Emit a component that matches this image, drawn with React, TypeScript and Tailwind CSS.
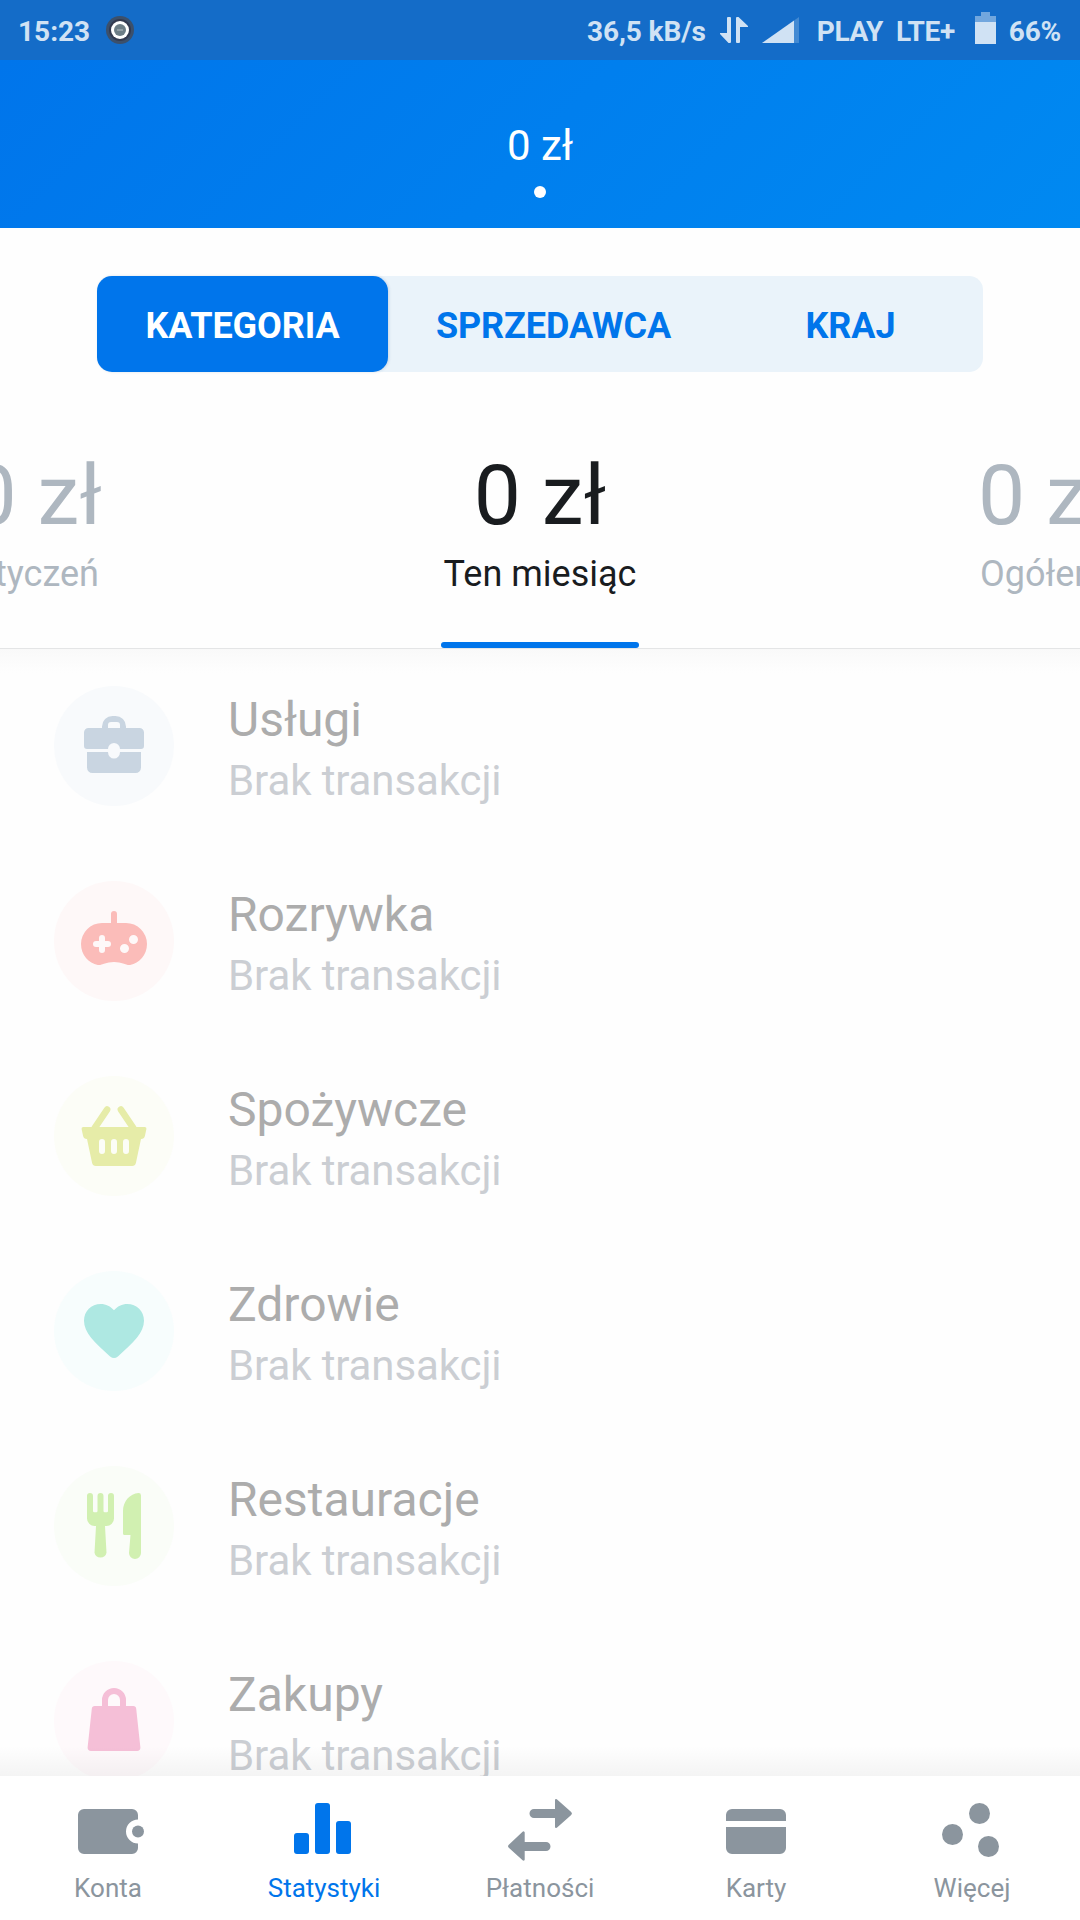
import type { ReactNode } from "react";

type Category = {
  name: string;
  color: string;
  background: string;
  icon: ReactNode;
};

const categories: Category[] = [
  {
    name: "Usługi",
    color: "text-[#c9d5e1]",
    background: "bg-[#f8fafc]",
    icon: (
      <>
        <path
          fillRule="evenodd"
          d="M8 6V5.500A3.500 3.500 0 0 1 11.500 2h1A3.500 3.500 0 0 1 16 5.500V6h4.500A1.500 1.500 0 0 1 22 7.500V12a1 1 0 0 1-1 1H14a2 2 0 0 0-4 0H3a1 1 0 0 1-1-1V7.500A1.500 1.500 0 0 1 3.500 6zM10 6h4V5a1 1 0 0 0-1-1h-2a1 1 0 0 0-1 1z"
        />
        <path d="M3 14h7a2 2.200 0 0 0 4 0h7v5.200A1.800 1.800 0 0 1 19.200 21H4.800A1.800 1.800 0 0 1 3 19.200z" />
      </>
    ),
  },
  {
    name: "Rozrywka",
    color: "text-[#fbbcb9]",
    background: "bg-[#fef8f8]",
    icon: (
      <path
        fillRule="evenodd"
        d="M11 6V3a1 1 0 0 1 2 0v3h3a7 7 0 0 1 7 7c0 3.700-2.600 6.400-5.600 7-1.400.2-2.600-1-5.400-1s-4 1.200-5.400 1C3.600 19.400 1 16.700 1 13a7 7 0 0 1 7-7zM7 11v1H6a1 1 0 0 0 0 2h1v1a1 1 0 0 0 2 0v-1h1a1 1 0 0 0 0-2H9v-1a1 1 0 0 0-2 0zM20 11.500a1.500 1.500 0 1 0-3 0a1.500 1.500 0 0 0 3 0zM17 14.500a1.500 1.500 0 1 0-3 0a1.500 1.500 0 0 0 3 0z"
      />
    ),
  },
  {
    name: "Spożywcze",
    color: "text-[#e6eca8]",
    background: "bg-[#fcfdf7]",
    icon: (
      <>
        <path d="M5.600 9.300 9.700 3.200M18.400 9.300 14.300 3.200" fill="none" stroke="currentColor" strokeWidth="2.200" strokeLinecap="round" />
        <path
          fillRule="evenodd"
          d="M1.800 9h20.400a.6.6 0 0 1 .6.700l-.5 2.300a1.300 1.300 0 0 1-1.300 1l-1.700 8a1.300 1.300 0 0 1-1.300 1H6a1.300 1.300 0 0 1-1.300-1L3 13a1.300 1.300 0 0 1-1.300-1l-.5-2.300A.6.6 0 0 1 1.800 9zM7 14v3a1 1 0 0 0 2 0v-3a1 1 0 0 0-2 0zm4 0v3a1 1 0 0 0 2 0v-3a1 1 0 0 0-2 0zm4 0v3a1 1 0 0 0 2 0v-3a1 1 0 0 0-2 0z"
        />
      </>
    ),
  },
  {
    name: "Zdrowie",
    color: "text-[#aee8e2]",
    background: "bg-[#f7fdfd]",
    icon: (
      <path d="M12 5.100C10.900 3.800 9.300 3 7.600 3 4.400 3 2 5.400 2 8.600 2 12.500 5.400 15.800 10.700 20.500q1.300 1 2.600 0C18.600 15.800 22 12.500 22 8.600 22 5.400 19.600 3 16.400 3c-1.700 0-3.300.8-4.400 2.100z" />
    ),
  },
  {
    name: "Restauracje",
    color: "text-[#d1f0b1]",
    background: "bg-[#fafdf8]",
    icon: (
      <>
        <path d="M3 2a1 1 0 0 1 2 0v5a.4.4 0 0 0 .4.4h.7a.4.4 0 0 0 .4-.4V2a1 1 0 0 1 2 0v5a.4.4 0 0 0 .4.4h.7A.4.4 0 0 0 10 7V2a1 1 0 0 1 2 0v7.500A2.500 2.500 0 0 1 9.500 12H9l.5 8.900a2.050 2.050 0 0 1-4 0L6 12h-.5A2.500 2.500 0 0 1 3 9.500z" />
        <path d="M15 7C15 3.800 17.300 1.200 20.200 1a.8.8 0 0 1 .8.800V21a2 2 0 0 1-4 0l.5-6h-2a.5.5 0 0 1-.5-.5z" />
      </>
    ),
  },
  {
    name: "Zakupy",
    color: "text-[#f5bfd7]",
    background: "bg-[#fef9fb]",
    icon: (
      <path
        fillRule="evenodd"
        d="M8 7V5a4 4 0 0 1 8 0v2h2.400a1 1 0 0 1 1 .9l1.400 12.900A1.100 1.100 0 0 1 19.700 22H4.300a1.100 1.100 0 0 1-1.100-1.200L4.600 7.900a1 1 0 0 1 1-.9zM10 7h4V5a2 2 0 0 0-4 0z"
      />
    ),
  },
];

const tabs: { label: string; active?: boolean; icon: ReactNode }[] = [
  {
    label: "Konta",
    icon: (
      <>
        <path d="M4 5h16a2 2 0 0 1 2 2v1.500a4 4 0 0 0 0 8V18a2 2 0 0 1-2 2H4a2 2 0 0 1-2-2V7a2 2 0 0 1 2-2z" />
        <circle cx="22" cy="12.500" r="2" />
      </>
    ),
  },
  {
    label: "Statystyki",
    active: true,
    icon: (
      <>
        <rect x="2" y="13" width="5" height="7" rx="1" />
        <rect x="9" y="3" width="5" height="17" rx="1" />
        <rect x="16" y="9" width="5" height="11" rx="1" />
      </>
    ),
  },
  {
    label: "Płatności",
    icon: (
      <>
        <path d="M10 5h7V2.100a.4.4 0 0 1 .7-.3l4.700 4.200a.7.700 0 0 1 0 1l-4.700 4.200a.4.4 0 0 1-.7-.3V8h-7a1.500 1.500 0 0 1 0-3z" />
        <path d="M14 16H6.900v-3.100a.4.4 0 0 0-.7-.3L1.600 16.900a.7.700 0 0 0 0 1l4.600 4.200a.4.4 0 0 0 .7-.3V19H14a1.500 1.500 0 0 0 0-3z" />
      </>
    ),
  },
  {
    label: "Karty",
    icon: (
      <path d="M2 9V7a2 2 0 0 1 2-2h16a2 2 0 0 1 2 2v2zM2 11h20v7a2 2 0 0 1-2 2H4a2 2 0 0 1-2-2z" />
    ),
  },
  {
    label: "Więcej",
    icon: (
      <>
        <circle cx="14.500" cy="6.500" r="3.500" />
        <circle cx="5.500" cy="13.500" r="3.500" />
        <circle cx="17.500" cy="17.500" r="3.500" />
      </>
    ),
  },
];

function Icon({ children }: { children: ReactNode }) {
  return (
    <svg viewBox="0 0 24 24" className="size-[72px] shrink-0 overflow-visible" fill="currentColor">
      {children}
    </svg>
  );
}

function StatusBar() {
  return (
    <div className="flex h-[60px] shrink-0 items-center bg-[#146cc8] px-[18px] text-[28px] leading-[58px] font-bold text-[#d0e2f4]">
      <span className="w-[72px] pt-[3px]">15:23</span>
      <svg viewBox="0 0 28 28" className="mb-px ml-4 size-[28px]">
        <circle cx="14" cy="14" r="14" fill="#3c506b" />
        <circle cx="14" cy="14" r="11" fill="#333a50" />
        <circle cx="14" cy="14" r="9" fill="#fff" />
        <circle cx="14" cy="14" r="6" fill="#6c7d86" />
        <path d="M11.500 14h1M13.500 14h1M15.500 14h1" stroke="#fff" strokeWidth="1" />
      </svg>
      <div className="ml-auto flex items-center">
        <span className="pt-[3px] tracking-[-0.1px]">36,5 kB/s</span>
        <svg viewBox="0 0 28 26" className="ml-[14px] h-[26px] w-[28px]" fill="currentColor">
          <path d="M7 1a1 1 0 0 1 1-1h2a1 1 0 0 1 1 1v24a1 1 0 0 1-1 1H8.500L0 17v-1h7zM16 1a1 1 0 0 1 1-1h1.500L28 9v1h-8v15a1 1 0 0 1-1 1h-2a1 1 0 0 1-1-1z" />
        </svg>
        <svg viewBox="0 0 37 26" className="ml-[14px] h-[26px] w-[37px]" fill="currentColor">
          <path d="M37 0v26H32V3.500z" opacity=".25" />
          <path d="M0 26 32 3.500V26z" />
        </svg>
        <span className="ml-[18px] pt-[3px] tracking-[-0.4px]">PLAY</span>
        <span className="ml-[13px] pt-[3px] tracking-[-0.4px]">LTE+</span>
        <svg viewBox="0 0 21 32" className="mb-1 ml-[20px] h-8 w-[21px]" fill="currentColor">
          <path d="M6 0h9v4h6v6H0V4h6z" opacity=".5" />
          <path d="M0 10h21v22H0z" />
        </svg>
        <span className="ml-[13px] pt-[3px] pr-px tracking-[-0.2px]">66%</span>
      </div>
    </div>
  );
}

export default function App() {
  return (
    <div className="flex h-[1920px] w-[1080px] flex-col overflow-hidden bg-[#fefefe] font-[Roboto,sans-serif]">
      <StatusBar />

      <header className="flex h-[168px] shrink-0 flex-col items-center bg-linear-[135deg,#0075eb,#0089f1] pt-[65px] text-white">
        <div className="text-[42px] leading-[42px]">0 zł</div>
        <div className="mt-[19px] size-3 rounded-full bg-white" />
      </header>

      <div className="mx-[97px] mt-12 flex h-24 shrink-0 rounded-[14px] bg-[#eaf3fa] text-center text-[36px] leading-[100px] font-bold tracking-[-0.1px] text-[#0075eb]">
        <div className="h-24 w-[291px] rounded-[15px] bg-[#0075eb] text-white shadow-[1px_0_3px_rgba(0,60,120,0.15)]">KATEGORIA</div>
        <div className="w-[331px]">SPRZEDAWCA</div>
        <div className="w-[263px]">KRAJ</div>
      </div>

      <div className="grid h-[277px] shrink-0 grid-cols-[102px_1fr_102px] border-b border-[#e4e5e6] pt-[82px] whitespace-nowrap text-[#aeb7c0]">
        <div className="flex flex-col items-end">
          <div className="text-[84px] leading-[84px]">0 zł</div>
          <div className="mt-[18px] pr-[3px] text-[36px] leading-[36px]">Styczeń</div>
        </div>
        <div className="flex flex-col items-center text-[#191c1f]">
          <div className="text-[84px] leading-[84px]">0 zł</div>
          <div className="mt-[18px] text-[36px] leading-[36px]">Ten miesiąc</div>
          <div className="mt-[50px] h-[6px] w-[198px] rounded-[3px] bg-[#0075eb]" />
        </div>
        <div className="flex flex-col items-start overflow-hidden">
          <div className="text-[84px] leading-[84px]">0 zł</div>
          <div className="mt-[18px] pl-[2px] text-[36px] leading-[36px]">Ogółem</div>
        </div>
      </div>

      <main className="relative min-h-0 flex-1 overflow-hidden bg-linear-[180deg,#f9f9f9_0,#fefefe_24px]">
        <div className="flex flex-col gap-[75px] pt-[37px] pl-[54px]">
          {categories.map((category) => (
            <div key={category.name} className="flex h-[120px] shrink-0 gap-[54px]">
              <div className={`flex size-[120px] shrink-0 items-center justify-center rounded-full ${category.background} ${category.color}`}>
                <Icon>{category.icon}</Icon>
              </div>
              <div className="pt-[10px]">
                <div className="text-[48px] leading-[48px] text-[#acacac]">{category.name}</div>
                <div className="mt-4 text-[42px] leading-[42px] tracking-[-0.1px] text-[#cbced3]">Brak transakcji</div>
              </div>
            </div>
          ))}
        </div>
        <div className="absolute inset-x-0 bottom-0 h-[30px] bg-linear-to-b from-black/0 to-black/4" />
      </main>

      <nav className="grid h-[144px] shrink-0 grid-cols-5 bg-white pt-[18px]">
        {tabs.map((tab) => (
          <div
            key={tab.label}
            className={`flex flex-col items-center ${tab.active ? "text-[#0075eb]" : "text-[#8b959e]"}`}
          >
            <Icon>{tab.icon}</Icon>
            <div className="mt-[8px] text-[26px] leading-[28px]">{tab.label}</div>
          </div>
        ))}
      </nav>
    </div>
  );
}
